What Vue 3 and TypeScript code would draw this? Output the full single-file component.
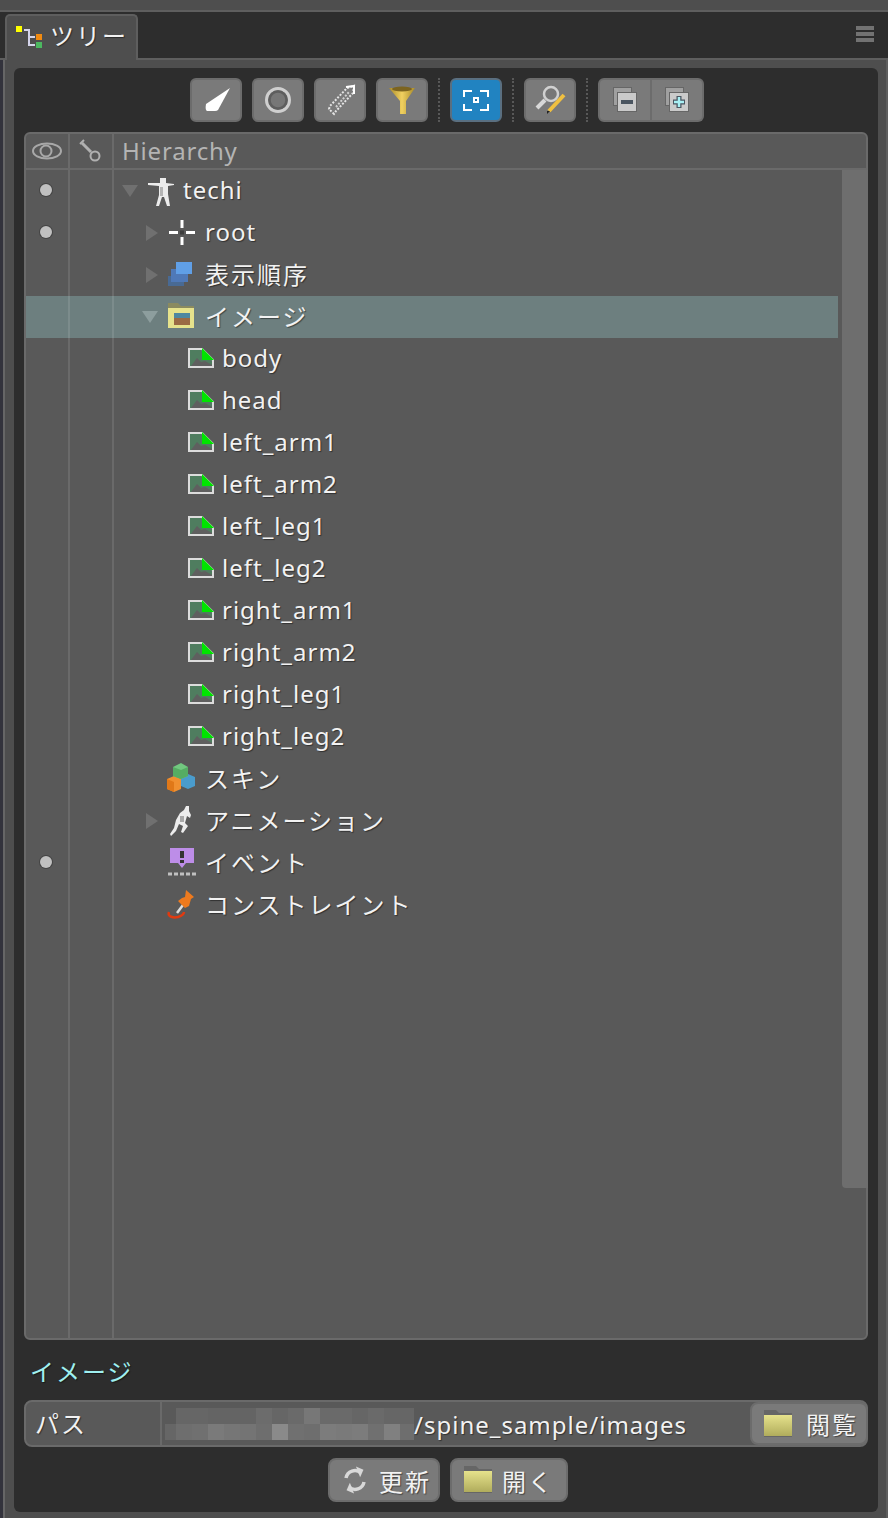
<script setup lang="ts">
interface TreeRow {
  label: string
  depth: number
  icon: string
  arrow?: 'down' | 'right'
  dot?: boolean
  selected?: boolean
}

const images = ['body', 'head', 'left_arm1', 'left_arm2', 'left_leg1', 'left_leg2', 'right_arm1', 'right_arm2', 'right_leg1', 'right_leg2']

const rows: TreeRow[] = [
  { label: 'techi', depth: 0, icon: 'skeleton', arrow: 'down', dot: true },
  { label: 'root', depth: 1, icon: 'bone', arrow: 'right', dot: true },
  { label: '表示順序', depth: 1, icon: 'order', arrow: 'right' },
  { label: 'イメージ', depth: 1, icon: 'imgfolder', arrow: 'down', selected: true },
  ...images.map((label) => ({ label, depth: 2, icon: 'image' })),
  { label: 'スキン', depth: 1, icon: 'skin' },
  { label: 'アニメーション', depth: 1, icon: 'run', arrow: 'right' },
  { label: 'イベント', depth: 1, icon: 'event', dot: true },
  { label: 'コンストレイント', depth: 1, icon: 'pin' },
]

const isCjk = (text: string) => /[^\x00-\x7f]/.test(text)

const blurTop = ['#666', '#666', '#646464', '#646464', '#646464', '#6c6c6c', '#666', '#6a6a6a', '#777', '#6a6a6a', '#6a6a6a', '#666', '#6a6a6a', '#666', '#666']
const blurBottom = ['#666', '#6e6e6e', '#707070', '#7a7a7a', '#767676', '#747474', '#6e6e6e', '#8a8a8a', '#707070', '#6e6e6e', '#7c7c7c', '#7a7a7a', '#7c7c7c', '#707070', '#808080', '#6e6e6e']
</script>

<template>
  <div class="app">
    <div class="top-strip"></div>
    <div class="tabbar">
      <div class="tab">
        <svg class="tab-icon" width="28" height="24" viewBox="0 0 28 24">
          <rect x="0" y="1" width="6" height="6" fill="#ffff00" />
          <path d="M8 5h5v15h6M13 12h6" fill="none" stroke="#d4d4ea" stroke-width="2" />
          <rect x="20" y="9" width="6" height="6" fill="#f08a10" />
          <rect x="20" y="17" width="6" height="6" fill="#4cb860" />
        </svg>
        <span class="tab-label">ツリー</span>
      </div>
      <div class="menu-icon"><i></i><i></i><i></i></div>
    </div>

    <div class="panel">
      <div class="inner">
        <div class="toolbar">
          <button class="tool">
            <svg width="52" height="44" viewBox="0 0 52 44"><path d="M16 26 40 10 28 32Q27 33 25 33H17Q15 32 16 26Z" fill="#fff" /></svg>
          </button>
          <button class="tool">
            <svg width="52" height="44" viewBox="0 0 52 44">
              <circle cx="26" cy="22" r="11.5" fill="#777" stroke="#cfcfcf" stroke-width="3" />
              <circle cx="26" cy="22" r="8.5" fill="none" stroke="#5e5e5e" stroke-width="2.5" />
            </svg>
          </button>
          <button class="tool">
            <svg width="52" height="44" viewBox="0 0 52 44">
              <path d="M20 36 15 31 16 28 33 10 40 8 39 15 22 33Z" fill="none" stroke="#e4e4e4" stroke-width="2" stroke-dasharray="2 1.5" />
              <path d="M22 29 35 14" fill="none" stroke="#d0d0d0" stroke-width="2" stroke-dasharray="2 1.5" />
              <path d="M32 9 40 8V16" fill="none" stroke="#fff" stroke-width="2" />
            </svg>
          </button>
          <button class="tool">
            <svg width="52" height="44" viewBox="0 0 52 44">
              <defs><linearGradient id="gold" x1="0" x2="1" y1="0" y2="0"><stop offset="0" stop-color="#a88a2a" /><stop offset=".5" stop-color="#f0d060" /><stop offset="1" stop-color="#a88a2a" /></linearGradient></defs>
              <path d="M13 10H39L30 23V36H24V23Z" fill="url(#gold)" />
              <ellipse cx="26" cy="11" rx="10" ry="2.4" fill="#7c6420" />
            </svg>
          </button>
          <span class="dots"></span>
          <button class="tool tool-active">
            <svg width="52" height="44" viewBox="0 0 52 44">
              <path d="M14 19v-6h8M30 13h8v6M38 26v6h-8M22 32h-8v-6" fill="none" stroke="#fff" stroke-width="2" />
              <rect x="23" y="19" width="6" height="6" fill="#fff" /><rect x="25" y="21" width="2" height="2" fill="#1f6fa8" />
            </svg>
          </button>
          <span class="dots"></span>
          <button class="tool">
            <svg width="52" height="44" viewBox="0 0 52 44">
              <circle cx="27" cy="16" r="7" fill="#777" stroke="#d0d0d0" stroke-width="2.5" />
              <path d="M21 22 13 30" stroke="#d8d8d8" stroke-width="4" />
              <path d="M25 33 40 17" stroke="#f0c040" stroke-width="4" />
              <path d="M23 36v-3h3z" fill="#222" />
            </svg>
          </button>
          <span class="dots"></span>
          <div class="tool-group">
            <button class="tool tool-left">
              <svg width="52" height="44" viewBox="0 0 52 44">
                <rect x="15.500" y="9.500" width="18" height="18" fill="#a0a0a0" stroke="#666" />
                <rect x="19.500" y="14.500" width="19" height="19" fill="#cacaca" stroke="#666" />
                <rect x="23" y="22" width="12" height="4" fill="#4a5560" />
              </svg>
            </button>
            <button class="tool tool-right">
              <svg width="52" height="44" viewBox="0 0 52 44">
                <rect x="15.500" y="9.500" width="18" height="18" fill="#a0a0a0" stroke="#666" />
                <rect x="19.500" y="14.500" width="19" height="19" fill="#cacaca" stroke="#666" />
                <path d="M29 18v12M23 24h12" stroke="#4a5560" stroke-width="5" />
                <path d="M29 19v10M24 24h10" stroke="#a8f0f4" stroke-width="2.500" />
              </svg>
            </button>
          </div>
        </div>

        <div class="table">
          <div class="thead">
            <div class="cell">
              <svg width="30" height="20" viewBox="0 0 30 20">
                <ellipse cx="15" cy="10" rx="14" ry="7.500" fill="none" stroke="#a8a8a8" stroke-width="2" />
                <circle cx="14" cy="10" r="5.500" fill="none" stroke="#a8a8a8" stroke-width="2" />
              </svg>
            </div>
            <div class="cell">
              <svg width="26" height="26" viewBox="0 0 26 26">
                <path d="M4 5 13 14" stroke="#b0b0b0" stroke-width="3" fill="none" />
                <path d="M2 6 6 2" stroke="#b0b0b0" stroke-width="2" />
                <circle cx="17" cy="18" r="4.500" fill="none" stroke="#b0b0b0" stroke-width="2" />
              </svg>
            </div>
            <div class="thead-title">Hierarchy</div>
          </div>

          <div class="tbody">
            <div class="rows">
              <div v-for="row in rows" :key="row.label" class="row" :class="{ selected: row.selected }">
                <div class="cell"><span v-if="row.dot" class="dot"></span></div>
                <div class="cell"></div>
                <div class="tree-cell" :class="`depth-${row.depth}`">
                  <span class="arrow-slot"><span v-if="row.arrow" :class="`arrow-${row.arrow}`"></span></span>

                  <svg v-if="row.icon === 'skeleton'" class="icon" width="32" height="32" viewBox="0 0 32 32">
                    <path d="M4 8H16V3H22V8L30 9V10L24 11V19L26 31H23L20 22H18L15 31H12L15 20V11L4 10Z" fill="#ececec" />
                    <path d="M16 12H19V21H16Z" fill="#b4b4b4" />
                  </svg>
                  <svg v-else-if="row.icon === 'bone'" class="icon" width="32" height="32" viewBox="0 0 32 32">
                    <path d="M16 3v8M16 20v8M3 15.500h9M20 15.500h9" stroke="#fff" stroke-width="3" />
                    <rect x="14" y="13.500" width="4" height="4" fill="#3c3c3c" />
                  </svg>
                  <svg v-else-if="row.icon === 'order'" class="icon" width="32" height="32" viewBox="0 0 32 32">
                    <rect x="2" y="17" width="16" height="10" fill="#496a94" />
                    <rect x="5" y="10" width="17" height="13" fill="#4f79b8" />
                    <rect x="10" y="3" width="16" height="12" fill="#609fe6" />
                  </svg>
                  <svg v-else-if="row.icon === 'imgfolder'" class="icon" width="32" height="32" viewBox="0 0 32 32">
                    <path d="M2 2H12L15 5H28V27H2Z" fill="#8a8a60" />
                    <rect x="2" y="7" width="26" height="20" fill="#e6e28c" />
                    <rect x="8" y="12" width="16" height="6" fill="#4e87a0" />
                    <rect x="8" y="17" width="16" height="7" fill="#9a6a44" />
                  </svg>
                  <svg v-else-if="row.icon === 'image'" class="icon-small" width="28" height="22" viewBox="0 0 28 22">
                    <path d="M1 1H14L25 12V19H1Z" fill="#4f7d5f" stroke="#dcdcdc" stroke-width="2" />
                    <path d="M3 18 9 10 13 14 17 13 24 17V18Z" fill="#5f5f5f" />
                    <path d="M14 0 26 12H14Z" fill="#00e400" />
                  </svg>
                  <svg v-else-if="row.icon === 'skin'" class="icon" width="32" height="32" viewBox="0 0 32 32">
                    <path d="M1 16 8 13 15 16V26L8 29 1 26Z" fill="#f09030" />
                    <path d="M1 16 8 19V29L1 26Z" fill="#e07818" />
                    <path d="M15 14 22 11 29 14V23L22 26 15 23Z" fill="#4a9ccc" />
                    <path d="M7 4 15 0 22 4V13L15 16 7 13Z" fill="#72c880" />
                    <path d="M7 4 15 7 22 4V13L15 16 7 13Z" fill="#55ad63" />
                  </svg>
                  <svg v-else-if="row.icon === 'run'" class="icon" width="32" height="32" viewBox="0 0 32 32">
                    <path d="M20 1H23V6L25 10 24 13 21 11 19 18 22 21 17 28 15 27 17 21 13 19 10 26 5 31 4 29 8 23 10 15 14 8 18 5Z" fill="#ececec" />
                    <path d="M14 11H18V17H14Z" fill="#a8a8a8" />
                  </svg>
                  <svg v-else-if="row.icon === 'event'" class="icon" width="32" height="32" viewBox="0 0 32 32">
                    <path d="M4 1H28V16H20L16 21 12 16H4Z" fill="#bd8de8" />
                    <rect x="14" y="4" width="4" height="7" fill="#333" />
                    <rect x="14" y="13" width="4" height="3" fill="#333" />
                    <path d="M2 27H30" stroke="#c0c0c0" stroke-width="3" stroke-dasharray="4 2" />
                  </svg>
                  <svg v-else-if="row.icon === 'pin'" class="icon" width="32" height="32" viewBox="0 0 32 32">
                    <path d="M3 23C1 28 8 29 12 28 15 27 18 25 18 23" fill="none" stroke="#e03a10" stroke-width="2.500" />
                    <path d="M11 24 17 16" stroke="#ddd" stroke-width="2.500" />
                    <path d="M20 1 28 8 25 10 23 17 19 19 12 12 16 9 19 8Z" fill="#ee7a1e" />
                  </svg>

                  <span class="label" :class="{ cjk: isCjk(row.label) }">{{ row.label }}</span>
                </div>
              </div>
              <div class="row filler">
                <div class="cell"></div>
                <div class="cell"></div>
              </div>
            </div>
            <div class="scroll-col"><div class="scrollbar"></div></div>
          </div>
        </div>

        <div class="caption cjk">イメージ</div>

        <div class="path-row">
          <div class="path-label cjk">パス</div>
          <div class="path-value">
            <div class="blur">
              <div class="blur-line first"><i v-for="(c, i) in blurTop" :key="i" :style="{ background: c }"></i></div>
              <div class="blur-line second"><i v-for="(c, i) in blurBottom" :key="i" :style="{ background: c }"></i></div>
            </div>
            <span class="path-text">/spine_sample/images</span>
          </div>
          <button class="btn btn-browse">
            <svg width="32" height="30" viewBox="0 0 32 30">
              <defs><linearGradient id="fold" x1="0" x2="0" y1="0" y2="1"><stop offset="0" stop-color="#e6e28c" /><stop offset="1" stop-color="#b0ac5c" /></linearGradient></defs>
              <path d="M2 1H14L17 4H30V28H2Z" fill="#666" />
              <rect x="2" y="6" width="28" height="21" fill="url(#fold)" />
            </svg>
            <span class="cjk">閲覧</span>
          </button>
        </div>

        <div class="actions">
          <button class="btn btn-refresh">
            <svg width="28" height="30" viewBox="0 0 28 30">
              <path d="M5 13A9 9 0 0 1 20 8" fill="none" stroke="#d8d8d8" stroke-width="3.500" />
              <path d="M14 2 22 4 20 12Z" fill="#d8d8d8" transform="rotate(10 18 7)" />
              <path d="M23 17A9 9 0 0 1 8 22" fill="none" stroke="#d8d8d8" stroke-width="3.500" />
              <path d="M14 28 6 26 8 18Z" fill="#d8d8d8" transform="rotate(10 10 23)" />
            </svg>
            <span class="cjk">更新</span>
          </button>
          <button class="btn btn-open">
            <svg width="32" height="30" viewBox="0 0 32 30">
              <path d="M2 1H14L17 4H30V28H2Z" fill="#666" />
              <rect x="2" y="6" width="28" height="21" fill="url(#fold)" />
            </svg>
            <span class="cjk">開く</span>
          </button>
        </div>
      </div>
    </div>
  </div>
</template>

<style>
html, body {
  background: #4e4e4e;
}
</style>

<style scoped>
.app {
  width: 888px;
  height: 1518px;
  display: flex;
  flex-direction: column;
  background: #33333c;
  overflow: hidden;
  font-family: "Noto Sans", "Noto Sans CJK JP", sans-serif;
  font-size: 24px;
  letter-spacing: 1px;
  color: #f2f2f2;
  text-shadow: 1px 1px 1px rgba(0, 0, 0, 0.45);
}

.cjk {
  letter-spacing: 2px;
}

button {
  padding: 0;
  margin: 0;
  border: 0;
  font: inherit;
  color: inherit;
  letter-spacing: inherit;
  text-shadow: inherit;
}

.top-strip {
  height: 10px;
  background: #4e4e4e;
  border-bottom: 2px solid #5e5e5e;
  flex: none;
}

.tabbar {
  height: 46px;
  flex: none;
  display: flex;
  align-items: flex-end;
  justify-content: space-between;
  background: #2d2d2d;
  border-bottom: 2px solid #5e5e5e;
  padding-left: 5px;
}

.tab {
  width: 133px;
  height: 46px;
  margin-bottom: -2px;
  box-sizing: border-box;
  display: flex;
  align-items: center;
  gap: 6px;
  padding: 0 0 8px 9px;
  background: #4e4e4e;
  border: 2px solid #5e5e5e;
  border-bottom: 0;
  border-radius: 5px 5px 0 0;
}

.tab-icon {
  flex: none;
  margin-top: 6px;
}

.tab-label {
  letter-spacing: 2px;
}

.menu-icon {
  display: flex;
  flex-direction: column;
  gap: 2px;
  width: 18px;
  margin: 0 14px 16px 0;
}

.menu-icon i {
  display: block;
  height: 4px;
  background: #727272;
}

.panel {
  flex: 1;
  display: flex;
  min-height: 0;
  margin-left: 3px;
  border-left: 2px solid #666;
  background: #4e4e4e;
  padding: 8px 8px 6px 9px;
  border-right: 2px solid #5e5e5e;
}

.inner {
  flex: 1;
  display: flex;
  flex-direction: column;
  background: #2d2d2d;
  border-radius: 6px;
  padding: 0 10px;
  min-width: 0;
}

.toolbar {
  height: 64px;
  flex: none;
  display: flex;
  align-items: flex-start;
  justify-content: center;
  padding: 10px 0 0 2px;
  box-sizing: border-box;
}

.tool {
  width: 52px;
  height: 44px;
  flex: none;
  background: #7a7a7a;
  border: 2px solid #6c6c6c;
  border-radius: 6px;
  margin-right: 10px;
  box-sizing: border-box;
  overflow: hidden;
}

.tool svg {
  display: block;
  margin: -2px;
}

.tool-active {
  background: #2183c1;
  border-color: #5a6f80;
}

.toolbar > .tool:nth-child(4),
.toolbar > .tool:nth-child(6),
.toolbar > .tool:nth-child(8) {
  margin-right: 0;
}

.dots {
  width: 0;
  height: 44px;
  border-left: 2px dotted #585858;
  margin: 0 10px;
  flex: none;
}

.tool-group {
  display: flex;
  flex: none;
  width: 106px;
}

.tool-left {
  margin: 0;
  border-radius: 6px 0 0 6px;
  border-right: 2px solid #6c6c6c;
  width: 54px;
}

.tool-right {
  margin: 0;
  border-radius: 0 6px 6px 0;
  border-left: 0;
}

.table {
  flex: none;
  height: 1208px;
  display: flex;
  flex-direction: column;
  background: #595959;
  border: 2px solid #6a6a6a;
  border-radius: 6px;
  box-sizing: border-box;
}

.thead {
  height: 34px;
  flex: none;
  display: flex;
  border-bottom: 2px solid #6a6a6a;
}

.cell {
  width: 44px;
  flex: none;
  box-sizing: border-box;
  border-right: 2px solid #6a6a6a;
  display: flex;
  align-items: center;
  justify-content: center;
}

.thead-title {
  padding-left: 8px;
  line-height: 34px;
  color: #b4b4b4;
  letter-spacing: 0.8px;
  text-shadow: none;
}

.tbody {
  flex: 1;
  display: flex;
  gap: 4px;
  min-height: 0;
}

.rows {
  flex: 1;
  display: flex;
  flex-direction: column;
  min-width: 0;
}

.row {
  height: 42px;
  flex: none;
  display: flex;
}

.row.selected {
  background: #6d7f7f;
}

.row.selected .cell {
  border-right-color: #7c8c8c;
}

.row.filler {
  flex: 1;
}

.dot {
  width: 12px;
  height: 12px;
  border-radius: 50%;
  background: #c0c0c0;
  box-shadow: 0 0 0 1px #444;
  margin: 0 2px 2px 0;
}

.tree-cell {
  flex: 1;
  display: flex;
  align-items: center;
  min-width: 0;
}

.depth-0 {
  padding-left: 8px;
}

.depth-1 {
  padding-left: 30px;
}

.depth-2 {
  padding-left: 52px;
}

.arrow-slot {
  width: 22px;
  flex: none;
  display: flex;
  align-items: center;
}

.arrow-down {
  width: 0;
  height: 0;
  border-left: 8px solid transparent;
  border-right: 8px solid transparent;
  border-top: 12px solid #707070;
}

.arrow-right {
  width: 0;
  height: 0;
  margin-left: 2px;
  border-top: 8px solid transparent;
  border-bottom: 8px solid transparent;
  border-left: 12px solid #707070;
}

.selected .arrow-down {
  border-top-color: #8d9e9e;
  margin-left: -2px;
}

.icon {
  flex: none;
  margin-right: 7px;
}

.icon-small {
  flex: none;
  margin-right: 6px;
}

.label {
  white-space: nowrap;
  line-height: 42px;
}

.label:not(.cjk) {
  margin-bottom: 2px;
}

.scroll-col {
  width: 26px;
  flex: none;
  margin-right: -2px;
}

.scrollbar {
  height: 1018px;
  background: #6e6e6e;
  border-radius: 0 0 0 4px;
}

.caption {
  height: 60px;
  flex: none;
  display: flex;
  align-items: center;
  padding-left: 6px;
  color: #9ff0f0;
}

.path-row {
  height: 47px;
  flex: none;
  display: flex;
  background: #595959;
  border: 2px solid #6a6a6a;
  border-radius: 8px;
  box-sizing: border-box;
}

.path-label {
  width: 136px;
  flex: none;
  box-sizing: border-box;
  border-right: 2px solid #6a6a6a;
  padding-left: 9px;
  line-height: 43px;
}

.path-value {
  flex: 1;
  display: flex;
  align-items: center;
  min-width: 0;
  padding-left: 3px;
}

.blur {
  width: 249px;
  height: 32px;
  flex: none;
  overflow: hidden;
}

.blur-line {
  display: flex;
  height: 16px;
}

.blur-line i {
  display: block;
  width: 16px;
  height: 16px;
  flex: none;
}

.blur-line.first {
  padding-left: 11px;
}

.blur-line.second {
  margin-left: -5px;
}

.path-text {
  white-space: nowrap;
  margin-top: 2px;
}

.btn {
  height: 44px;
  box-sizing: border-box;
  display: flex;
  align-items: center;
  background: #7a7a7a;
  border: 2px solid #6c6c6c;
  border-radius: 8px;
  flex: none;
}

.btn-browse {
  width: 118px;
  height: 43px;
  margin: 0 -2px 0 0;
  padding-left: 10px;
  gap: 12px;
}

.actions {
  flex: none;
  display: flex;
  justify-content: center;
  gap: 10px;
  padding: 11px 0 0 4px;
}

.btn-refresh {
  width: 112px;
  padding-left: 11px;
  gap: 10px;
}

.btn-open {
  width: 118px;
  padding-left: 10px;
  gap: 8px;
}
</style>
